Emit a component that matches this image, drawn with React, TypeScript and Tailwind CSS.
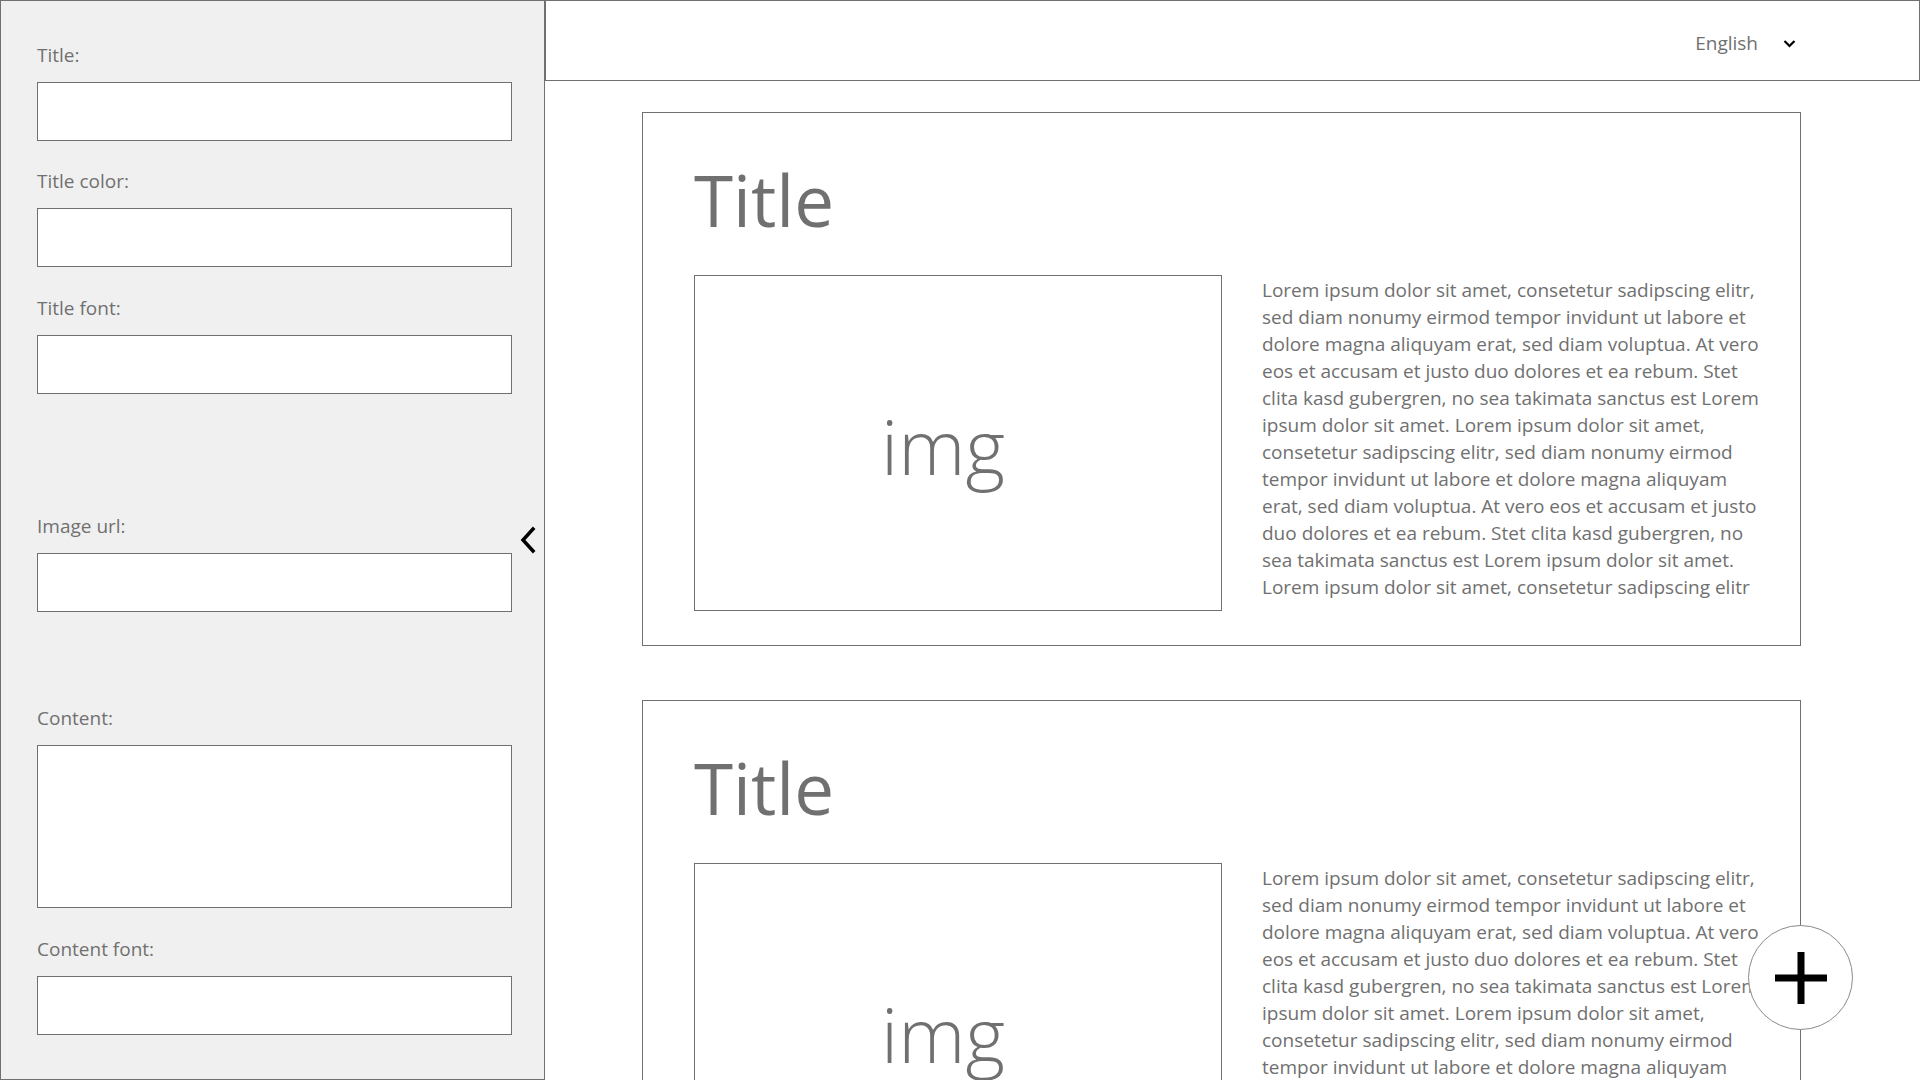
import { type ReactNode } from "react";

const LOREM_LINES = [
  "Lorem ipsum dolor sit amet, consetetur sadipscing elitr,",
  "sed diam nonumy eirmod tempor invidunt ut labore et",
  "dolore magna aliquyam erat, sed diam voluptua. At vero",
  "eos et accusam et justo duo dolores et ea rebum. Stet",
  "clita kasd gubergren, no sea takimata sanctus est Lorem",
  "ipsum dolor sit amet. Lorem ipsum dolor sit amet,",
  "consetetur sadipscing elitr, sed diam nonumy eirmod",
  "tempor invidunt ut labore et dolore magna aliquyam",
  "erat, sed diam voluptua. At vero eos et accusam et justo",
  "duo dolores et ea rebum. Stet clita kasd gubergren, no",
  "sea takimata sanctus est Lorem ipsum dolor sit amet.",
  "Lorem ipsum dolor sit amet, consetetur sadipscing elitr",
];

function Field({
  label,
  className = "",
  tall = false,
}: {
  label: string;
  className?: string;
  tall?: boolean;
}) {
  return (
    <div className={`flex flex-col ${className}`}>
      <label className="mb-[15px] block text-[19px] leading-[24px] text-[#707070]">{label}</label>
      {tall ? (
        <textarea className="h-[163px] w-[475px] resize-none border border-[#707070] bg-white outline-none" />
      ) : (
        <input className="h-[59px] w-[475px] border border-[#707070] bg-white outline-none" />
      )}
    </div>
  );
}

function Sidebar() {
  return (
    <aside className="relative flex h-full w-[545px] shrink-0 flex-col border border-[#707070] bg-[#f0f0f0] pl-[36px] pt-[42px]">
      <Field label="Title:" />
      <Field label="Title color:" className="mt-[28px]" />
      <Field label="Title font:" className="mt-[29px]" />
      <Field label="Image url:" className="mt-[120px]" />
      <Field label="Content:" className="mt-[94px]" tall />
      <Field label="Content font:" className="mt-[29px]" />

      <button type="button" className="absolute left-[516px] top-[523px] p-[2px]" aria-label="Collapse">
        <svg width="18" height="28" viewBox="0 0 18 28" fill="none">
          <polyline points="14,3 4,14 14,25" stroke="#000" strokeWidth="3.5" strokeLinecap="square" />
        </svg>
      </button>
    </aside>
  );
}

function Header() {
  return (
    <header className="flex h-[81px] shrink-0 items-center justify-end border border-[#707070] pr-[123px] pt-[6px]">
      <span className="text-[19px] text-[#707070]">English</span>
      <svg className="ml-[25px]" width="13" height="9" viewBox="0 0 13 9" fill="none">
        <polyline points="1.5,2 6.5,7 11.5,2" stroke="#000" strokeWidth="2.2" />
      </svg>
    </header>
  );
}

function Card({ children }: { children?: ReactNode }) {
  return (
    <section className="w-[1159px] shrink-0 border border-[#707070] bg-white pb-[34px] pl-[51px] pt-[49px]">
      <h1 className="text-[71px] font-normal leading-[76px] text-[#707070]">Title</h1>
      <div className="mt-[37px] flex">
        <div className="flex h-[336px] w-[528px] shrink-0 items-center justify-center border border-[#707070] pr-[30px] pt-[6px]">
          <span className="text-[76px] font-light leading-[76px] text-[#707070]">img</span>
        </div>
        <div className="ml-[40px] pt-[2px] text-[19px] leading-[27px] text-[#707070]">
          {LOREM_LINES.map((line, i) => (
            <span key={i} className="block whitespace-nowrap">
              {line}
            </span>
          ))}
        </div>
      </div>
      {children}
    </section>
  );
}

export default function App() {
  return (
    <div className="relative flex h-[1080px] w-[1920px] overflow-hidden bg-white font-['Open_Sans',sans-serif]">
      <Sidebar />
      <main className="flex min-w-0 flex-1 flex-col">
        <Header />
        <div className="flex flex-col gap-[54px] pl-[97px] pt-[31px]">
          <Card />
          <Card />
        </div>
      </main>

      <button
        type="button"
        aria-label="Add"
        className="absolute left-[1748px] top-[925px] flex h-[105px] w-[105px] items-center justify-center rounded-full border border-[#8a8a8a] bg-white"
      >
        <svg width="52" height="52" viewBox="0 0 52 52">
          <rect x="0" y="22.5" width="52" height="7" fill="#000" />
          <rect x="22.5" y="0" width="7" height="52" fill="#000" />
        </svg>
      </button>
    </div>
  );
}
